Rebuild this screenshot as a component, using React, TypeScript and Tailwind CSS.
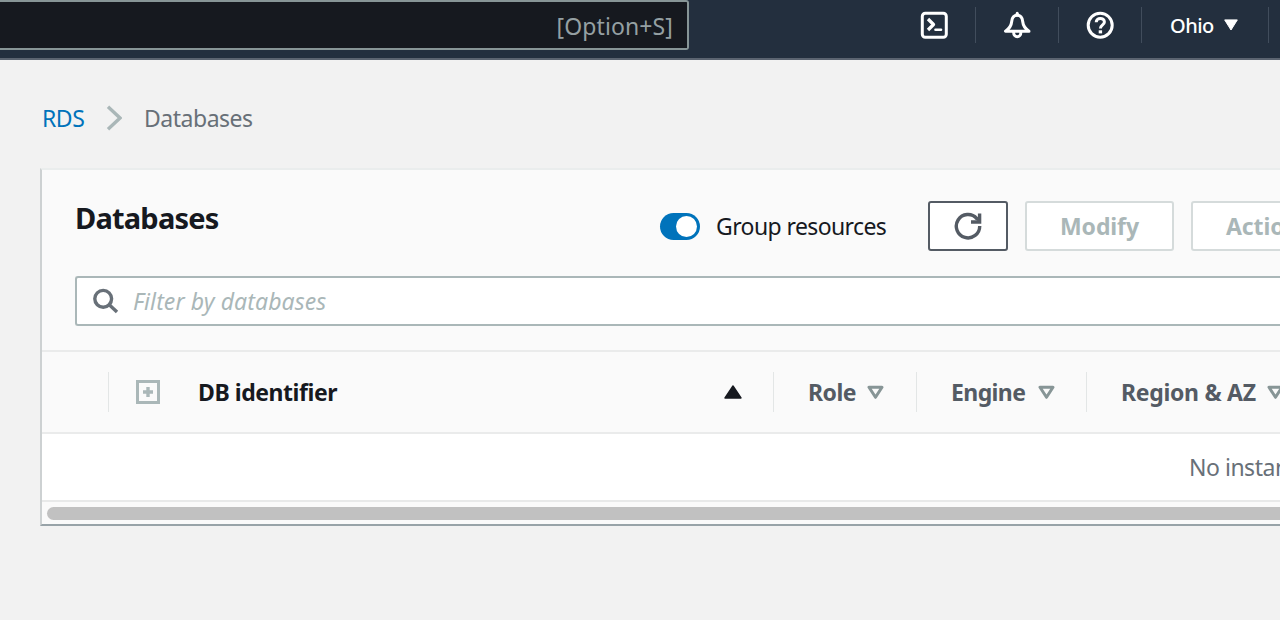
import type { ReactNode } from "react";

function Divider() {
  return <div className="h-9 w-px shrink-0 bg-[#414d5c]" />;
}

function NavIcon({ children }: { children: ReactNode }) {
  return (
    <div className="flex w-[82px] shrink-0 justify-center">
      <svg width="28" height="28" viewBox="0 0 28 28" fill="none" stroke="#fff" strokeWidth="3" strokeLinejoin="round">
        {children}
      </svg>
    </div>
  );
}

function SortIcon() {
  return (
    <svg className="ml-px shrink-0" width="17" height="15" viewBox="0 0 17 15" fill="none" stroke="#879596" strokeWidth="3" strokeLinejoin="round">
      <path d="M2 2.2H15L8.5 12.3Z" />
    </svg>
  );
}

function Column({ label, labelClass, className }: { label: string; labelClass: string; className: string }) {
  return (
    <div className={`flex h-10 shrink-0 items-center border-l border-[#e3e6e6] pl-[34px] text-[#545b64] ${className}`}>
      <span className={`shrink-0 font-bold ${labelClass}`}>{label}</span>
      <SortIcon />
    </div>
  );
}

export default function App() {
  return (
    <div className="h-[620px] w-[1280px] overflow-hidden bg-[#f2f2f2] font-['Noto_Sans','Open_Sans',sans-serif] text-[23px] leading-[30px] tracking-[-0.48px] whitespace-nowrap text-[#16191f]">
      <header className="flex h-[60px] items-start border-b-2 border-[#5b6470] bg-[#232f3e]">
        <div className="flex h-[50px] w-[689px] shrink-0 items-center justify-end rounded-r-[3px] border-2 border-l-0 border-[#879596] bg-[#16191f] pt-px pr-[14px] text-[23px] tracking-[0.1px] text-[#95a0a3]">
          [Option+S]
        </div>
        <div className="ml-[204px] flex h-[50px] items-center text-white">
          <NavIcon>
            <rect x="2.3" y="2.3" width="24" height="24" rx="3" />
            <path d="M8 8L13.5 13.5L8 19" strokeWidth="3.3" />
            <path d="M15.5 18.7H21" strokeLinecap="round" strokeWidth="2.6" />
          </NavIcon>
          <Divider />
          <NavIcon>
            <path d="M14.2 2.2V4" strokeLinecap="round" />
            <path d="M14.2 4.2C10.6 4.2 9 7 8.7 10.5C8.3 15 6.5 17.5 2.5 20.2H26C22 17.5 20.1 15 19.7 10.5C19.4 7 17.8 4.2 14.2 4.2Z" />
            <path d="M10.6 21C10.6 27.4 17.9 27.4 17.9 21" />
          </NavIcon>
          <Divider />
          <NavIcon>
            <circle cx="14.2" cy="14.2" r="12" />
            <path d="M10.2 11.2C10.2 6.2 18.4 6.2 18.4 11C18.4 14 14.4 13.8 14.4 17.6" />
            <path d="M14.4 19.3V22.4" strokeWidth="3.4" />
          </NavIcon>
          <Divider />
          <div className="flex w-[126px] shrink-0 items-center pl-7">
            <span className="w-[54px] pt-px text-[20px] font-medium tracking-[-0.5px]">Ohio</span>
            <svg width="14" height="12" viewBox="0 0 14 12" fill="#fff" stroke="#fff" strokeWidth="1" strokeLinejoin="round">
              <path d="M.7 .9H13.3L7 11Z" />
            </svg>
          </div>
          <Divider />
        </div>
      </header>

      <nav className="flex h-[108px] items-center pt-[8px] pl-[42px]">
        <span className="w-[64px] pb-px text-[#0073bb]">RDS</span>
        <svg className="mr-[22px]" width="16" height="26" viewBox="0 0 16 26" fill="none" stroke="#aab7b8" strokeWidth="3.4">
          <path d="M2 1.8L14 13L2 24.2" />
        </svg>
        <span className="pb-px text-[#687078]">Databases</span>
      </nav>

      <main className="ml-10 h-[358px] border-t-2 border-b-2 border-l-2 border-t-[#eaeded] border-b-[#98a3a8] border-l-[#cdd1d2] bg-white">
        <section className="h-[182px] border-b-2 border-[#eaebeb] bg-[#fafafa] pt-[31px] pl-[33px]">
          <div className="flex h-[50px] items-center">
            <h1 className="w-[585px] shrink-0 pb-4 text-[29px] leading-9 font-bold tracking-[-0.8px]">Databases</h1>
            <div className="flex h-[27px] w-10 shrink-0 items-center justify-end rounded-full bg-[#0073bb] pr-[3px]">
              <div className="size-[21px] rounded-full bg-white" />
            </div>
            <span className="ml-4 w-[212px] shrink-0 pb-px tracking-[-0.6px]">Group resources</span>
            <button className="flex h-[50px] w-20 shrink-0 items-center justify-center rounded-[3px] border-2 border-[#545b64] bg-white">
              <svg width="28" height="28" viewBox="0 0 28 28" fill="none" stroke="#545b64" strokeWidth="3.4">
                <path d="M25.7 14A11.7 11.7 0 1 1 22.8 6.5" />
                <path d="M25.6 1.5V10H17" />
                <path d="M20.5 7L25 4V10Z" fill="#545b64" stroke="none" />
              </svg>
            </button>
            <button className="ml-[17px] h-[50px] w-[149px] shrink-0 rounded-[3px] border-2 border-[#d5dbdb] bg-white font-bold tracking-[-0.1px] text-[#aab7b8]">
              Modify
            </button>
            <button className="ml-[17px] h-[50px] w-[190px] shrink-0 rounded-[3px] border-2 border-[#d5dbdb] bg-white pl-[33px] text-left font-bold tracking-[-0.1px] text-[#aab7b8]">
              Actions
            </button>
          </div>
          <div className="mt-[25px] flex h-[50px] items-center rounded-l-[3px] border-2 border-r-0 border-[#aab7b8] bg-white pl-4">
            <svg className="mr-[14px] shrink-0" width="26" height="26" viewBox="0 0 26 26" fill="none" stroke="#687078" strokeWidth="3.4">
              <circle cx="10.2" cy="10.8" r="8.4" />
              <path d="M16 16.6L24 24" />
            </svg>
            <span className="tracking-[0.1px] text-[#aab7b8] italic">Filter by databases</span>
          </div>
        </section>

        <section className="flex h-[82px] items-center border-b-2 border-[#eaebeb] bg-[#fafafa]">
          <div className="ml-[66px] flex h-10 w-[665px] shrink-0 items-center border-l border-[#e3e6e6]">
            <svg className="ml-[27px] shrink-0" width="24" height="24" viewBox="0 0 24 24" fill="none" stroke="#aab7b8" strokeWidth="3">
              <rect x="1.5" y="1.5" width="21" height="21" />
              <path d="M12 7V17M7 12H17" strokeWidth="3.4" />
            </svg>
            <span className="ml-[38px] w-[526px] shrink-0 font-bold tracking-[-0.45px]">DB identifier</span>
            <svg className="shrink-0" width="18" height="14" viewBox="0 0 18 14" fill="#16191f" stroke="#16191f" strokeWidth="1.4" strokeLinejoin="round">
              <path d="M1 13L9 1L17 13Z" />
            </svg>
          </div>
          <Column label="Role" labelClass="w-[58px] tracking-[-0.5px]" className="w-[143px]" />
          <Column label="Engine" labelClass="w-[86px] tracking-[-0.6px]" className="w-[170px]" />
          <Column label="Region & AZ" labelClass="w-[145px] tracking-[-0.3px]" className="w-[230px]" />
        </section>

        <div className="h-[68px] border-b-2 border-[#e8e9e9] pt-[18px] pl-[1147px] text-[#687078]">No instances found</div>
        <div className="h-[22px] bg-[#fafafa] pt-[5px] pl-[5px]">
          <div className="h-[13px] rounded-l-full bg-[#c1c1c1]" />
        </div>
      </main>
    </div>
  );
}
